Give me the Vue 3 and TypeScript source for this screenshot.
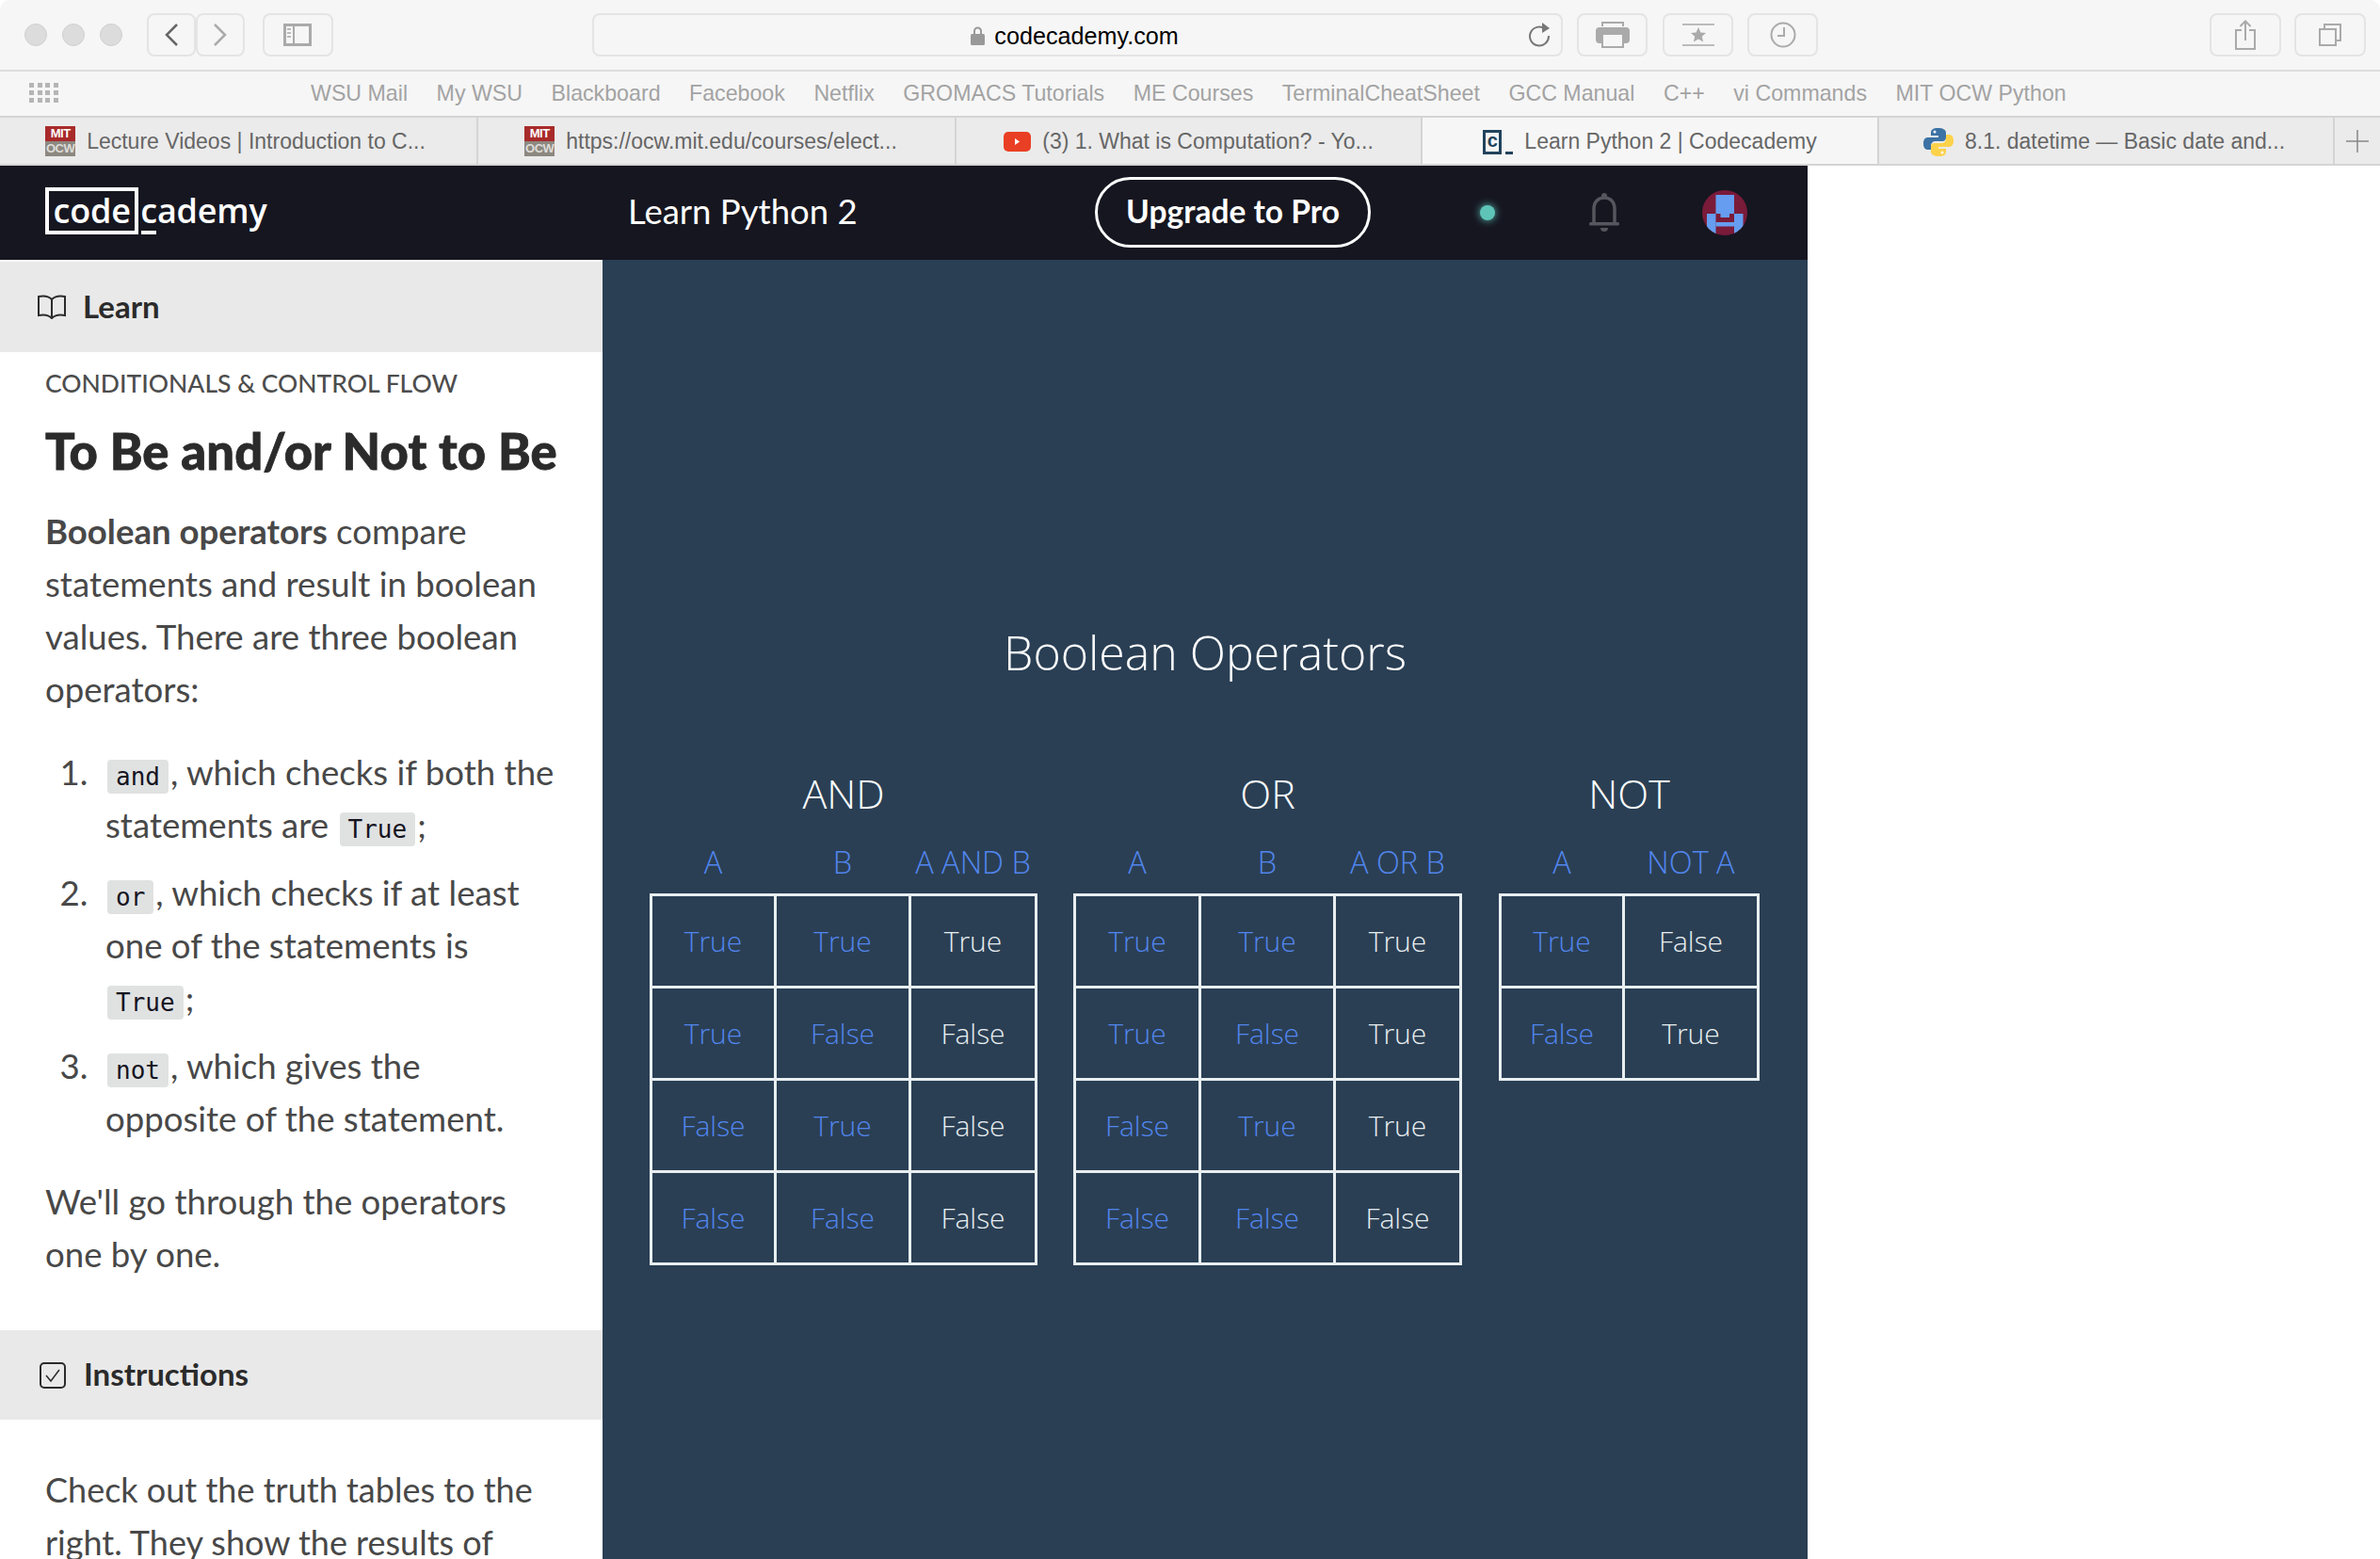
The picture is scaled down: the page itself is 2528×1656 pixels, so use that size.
<script setup lang="ts">
interface TruthTable {
  title: string
  widths: number[]
  head: string[]
  rows: string[][]
}

const bookmarks = [
  'WSU Mail', 'My WSU', 'Blackboard', 'Facebook', 'Netflix', 'GROMACS Tutorials',
  'ME Courses', 'TerminalCheatSheet', 'GCC Manual', 'C++', 'vi Commands', 'MIT OCW Python',
]

const tables: TruthTable[] = [
  {
    title: 'AND',
    widths: [132, 143, 134],
    head: ['A', 'B', 'A AND B'],
    rows: [
      ['True', 'True', 'True'],
      ['True', 'False', 'False'],
      ['False', 'True', 'False'],
      ['False', 'False', 'False'],
    ],
  },
  {
    title: 'OR',
    widths: [133, 143, 134],
    head: ['A', 'B', 'A OR B'],
    rows: [
      ['True', 'True', 'True'],
      ['True', 'False', 'True'],
      ['False', 'True', 'True'],
      ['False', 'False', 'False'],
    ],
  },
  {
    title: 'NOT',
    widths: [131, 143],
    head: ['A', 'NOT A'],
    rows: [
      ['True', 'False'],
      ['False', 'True'],
    ],
  },
]
</script>

<template>
  <div class="page">
    <header class="toolbar">
      <div class="lights"><i></i><i></i><i></i></div>
      <div class="nav-btns">
        <button class="tb-btn back">
          <svg width="16" height="24" viewBox="0 0 16 24"><path d="M14 1 3 12l11 11" fill="none" stroke="#666" stroke-width="2.5" /></svg>
        </button>
        <button class="tb-btn back">
          <svg width="16" height="24" viewBox="0 0 16 24"><path d="M2 1l11 11L2 23" fill="none" stroke="#aaa" stroke-width="2.5" /></svg>
        </button>
      </div>
      <button class="tb-btn sidebar">
        <svg width="30" height="24" viewBox="0 0 30 24">
          <rect x="1.5" y="1.5" width="27" height="21" fill="none" stroke="#aaa" stroke-width="3" />
          <path d="M11 2v20" stroke="#aaa" stroke-width="2" />
          <path d="M4 6h4M4 10h4M4 14h4" stroke="#bbb" stroke-width="2" />
        </svg>
      </button>
      <div class="url">
        <svg class="lock" width="15" height="20" viewBox="0 0 15 20">
          <path d="M4 9V5a3.5 3.5 0 0 1 7 0v4" fill="none" stroke="#999" stroke-width="2" />
          <rect x="0" y="8" width="15" height="12" rx="1.5" fill="#999" />
        </svg>
        <span>codecademy.com</span>
        <svg class="reload" width="24" height="26" viewBox="0 0 24 26">
          <path d="M17 6.5A10 10 0 1 0 21 14" fill="none" stroke="#777" stroke-width="2" />
          <path d="M14 0l8 6-8 5z" fill="#777" />
        </svg>
      </div>
      <button class="tb-btn small print">
        <svg width="36" height="28" viewBox="0 0 36 28">
          <path d="M7 5V1h22v4" fill="none" stroke="#aaa" stroke-width="2" />
          <rect x="0" y="6" width="36" height="17" rx="4" fill="#aaa" />
          <rect x="7" y="13" width="22" height="14" fill="#f6f6f6" stroke="#aaa" stroke-width="2" />
        </svg>
      </button>
      <button class="tb-btn small">
        <svg width="34" height="24" viewBox="0 0 34 24">
          <path d="M0 1h34M0 23h34" stroke="#bbb" stroke-width="2" />
          <path d="M17 4l2.4 5.5 5.6.5-4.2 3.8 1.3 5.7L17 16.5l-5.1 3 1.3-5.7L9 10l5.6-.5z" fill="#aaa" />
        </svg>
      </button>
      <button class="tb-btn small">
        <svg width="28" height="28" viewBox="0 0 28 28">
          <circle cx="14" cy="14" r="12.5" fill="none" stroke="#aaa" stroke-width="2" />
          <path d="M15 6v9H8" fill="none" stroke="#aaa" stroke-width="2" />
        </svg>
      </button>
      <button class="tb-btn wide share">
        <svg width="22" height="32" viewBox="0 0 22 32">
          <path d="M7 11H1v20h20V11h-6" fill="none" stroke="#aaa" stroke-width="2" />
          <path d="M11 22V2M5.5 7 11 1.5 16.5 7" fill="none" stroke="#aaa" stroke-width="2" />
        </svg>
      </button>
      <button class="tb-btn wide">
        <svg width="24" height="24" viewBox="0 0 24 24">
          <rect x="1" y="6" width="17" height="17" fill="none" stroke="#aaa" stroke-width="2" />
          <path d="M6 6V1h17v17h-5" fill="none" stroke="#aaa" stroke-width="2" />
        </svg>
      </button>
    </header>

    <div class="bookmarks">
      <div class="apps"><i v-for="n in 12" :key="n"></i></div>
      <span v-for="b in bookmarks" :key="b">{{ b }}</span>
    </div>

    <div class="tabs">
      <div class="tab t1">
        <span class="fav-mit"><b>MIT</b><b>OCW</b></span>
        <span>Lecture Videos | Introduction to C...</span>
      </div>
      <div class="tab t2">
        <span class="fav-mit"><b>MIT</b><b>OCW</b></span>
        <span>https://ocw.mit.edu/courses/elect...</span>
      </div>
      <div class="tab t3">
        <svg width="29" height="21" viewBox="0 0 29 21">
          <rect width="29" height="21" rx="5" fill="#e93f24" />
          <path d="M12 7l5 3.5-5 3.5z" fill="#fff" />
        </svg>
        <span>(3) 1. What is Computation? - Yo...</span>
      </div>
      <div class="tab t4 active">
        <span class="fav-cc"><em>c</em><u></u></span>
        <span>Learn Python 2 | Codecademy</span>
      </div>
      <div class="tab t5">
        <svg width="32" height="32" viewBox="0 0 32 32">
          <path d="M15.5 1C10 1 8 3 8 6v3h8v2H5c-3 0-5 2-5 6.500S2 24 5 24h3v-4c0-3 2-5 5-5h7c2.500 0 4-1.500 4-4V6c0-3-3-5-8.500-5z" fill="#3c72a4" />
          <path d="M16.5 31c5.500 0 7.500-2 7.500-5v-3h-8v-2h11c3 0 5-2 5-6.500S30 8 27 8h-3v4c0 3-2 5-5 5h-7c-2.500 0-4 1.500-4 4v5c0 3 3 5 8.500 5z" fill="#fcd24a" />
          <circle cx="12" cy="5" r="1.5" fill="#fff" />
          <circle cx="20" cy="27" r="1.5" fill="#fff" />
        </svg>
        <span>8.1. datetime — Basic date and...</span>
      </div>
      <div class="tab-plus">
        <svg width="24" height="24" viewBox="0 0 24 24"><path d="M12 0v24M0 12h24" stroke="#888" stroke-width="1.5" /></svg>
      </div>
    </div>

    <div class="app">
      <nav class="cc-nav">
        <div class="logo"><span class="logo-box">code</span><span class="logo-c">c</span>ademy</div>
        <div class="course">Learn Python 2</div>
        <a class="upgrade"><span>Upgrade to Pro</span></a>
        <span class="status"></span>
        <svg class="bell" width="32" height="42" viewBox="0 0 32 42">
          <circle cx="16" cy="3" r="3" fill="#56565e" />
          <path d="M5 32V17C5 9 10 5 16 5s11 4 11 12v15" fill="none" stroke="#56565e" stroke-width="3.5" />
          <rect x="0" y="31" width="32" height="3.5" rx="1.5" fill="#56565e" />
          <path d="M12 37h8a4 4 0 0 1-8 0z" fill="#56565e" />
        </svg>
        <svg class="avatar" width="48" height="48" viewBox="0 0 48 48">
          <defs><clipPath id="av"><circle cx="24" cy="24" r="24" /></clipPath></defs>
          <g clip-path="url(#av)">
            <rect width="48" height="48" fill="#7a1b3a" />
            <g fill="#669df0">
              <rect x="14.5" y="5" width="19.5" height="20" />
              <rect x="19.5" y="25" width="9.5" height="4" />
              <rect x="5" y="25" width="9.5" height="23" />
              <rect x="34" y="25" width="9.5" height="23" />
              <rect x="14.5" y="34" width="19.5" height="4.5" />
            </g>
          </g>
        </svg>
      </nav>

      <div class="panes">
        <aside class="lesson">
          <div class="bar learn-bar">
            <svg width="30" height="26" viewBox="0 0 30 26">
              <path d="M15 5C12 2 6 1 1 2v20c5-1 11 0 14 3 3-3 9-4 14-3V2c-5-1-11 0-14 3zM15 5v20" fill="none" stroke="#2b2b2b" stroke-width="2" />
            </svg>
            <span>Learn</span>
          </div>
          <div class="body">
            <div class="crumb">CONDITIONALS &amp; CONTROL FLOW</div>
            <h1>To Be and/or Not to Be</h1>
            <p><strong>Boolean operators</strong> compare statements and result in boolean values. There are three boolean operators:</p>
            <ol>
              <li><code>and</code>, which checks if both the statements are <code>True</code>;</li>
              <li><code>or</code>, which checks if at least one of the statements is<br /><code>True</code>;</li>
              <li><code>not</code>, which gives the<br />opposite of the statement.</li>
            </ol>
            <p class="last">We'll go through the operators<br />one by one.</p>
          </div>
          <div class="bar instr-bar">
            <svg width="28" height="28" viewBox="0 0 28 28">
              <rect x="1" y="1" width="26" height="26" rx="4" fill="none" stroke="#2b2b2b" stroke-width="2" />
              <path d="M7 14l5 6 9-12" fill="none" stroke="#2b2b2b" stroke-width="1.5" />
            </svg>
            <span>Instructions</span>
          </div>
          <div class="body instr">
            <p>Check out the truth tables to the right. They show the results of</p>
          </div>
        </aside>

        <main class="stage">
          <h2>Boolean Operators</h2>
          <div class="groups">
            <section v-for="t in tables" :key="t.title" class="group">
              <h3>{{ t.title }}</h3>
              <table>
                <colgroup><col v-for="(w, i) in t.widths" :key="i" :style="{ width: w + 'px' }" /></colgroup>
                <thead>
                  <tr><th v-for="h in t.head" :key="h">{{ h }}</th></tr>
                </thead>
                <tbody>
                  <tr v-for="(row, r) in t.rows" :key="r">
                    <td v-for="(c, i) in row" :key="i" :class="{ input: i < row.length - 1 }">{{ c }}</td>
                  </tr>
                </tbody>
              </table>
            </section>
          </div>
        </main>
      </div>
    </div>
  </div>
</template>

<style>
html, body { margin: 0; background: #fff; }
</style>

<style scoped>
.page { width: 2528px; height: 1656px; overflow: hidden; font-family: "Liberation Sans", sans-serif; }

.toolbar {
  height: 74px; box-sizing: border-box; display: flex; align-items: center; padding: 0 15px 0 26px;
  background: #f6f6f6; border-radius: 10px 10px 0 0; border-bottom: 0;
}
.lights { display: flex; gap: 16px; margin-right: 26px; }
.lights i { width: 24px; height: 24px; border-radius: 50%; background: #dcdcdc; border: 1px solid #d0d0d0; box-sizing: border-box; }
.tb-btn {
  height: 46px; padding: 0; box-sizing: border-box; display: flex; align-items: center; justify-content: center;
  background: #f6f6f6; border: 2px solid #e4e4e4; border-radius: 8px;
}
.nav-btns { display: flex; margin-right: 19px; }
.back { width: 52px; }
.sidebar { width: 75px; margin-right: 275px; }
.url {
  position: relative; width: 1032px; height: 46px; box-sizing: border-box; display: flex; align-items: center; justify-content: center; gap: 10px;
  border: 2px solid #e4e4e4; border-radius: 8px; font-size: 25.2px; color: #000; margin-right: 15px; padding: 2px 6px 0 0;
}
.reload { position: absolute; right: 10px; top: 8px; }
.small { width: 75px; margin-right: 15px; }
.print { margin-right: 16px; }
.wide { width: 76px; }
.share { margin-left: 401px; margin-right: 14px; }

.bookmarks {
  height: 51px; box-sizing: border-box; display: flex; align-items: center; gap: 30.5px; padding-left: 330px; position: relative;
  background: #f6f6f6; border-top: 2px solid #dcdcdc; border-bottom: 2px solid #d4d4d4;
  font-size: 23.2px; color: #a3a3a3;
}
.apps { position: absolute; left: 31px; top: 12px; display: grid; grid-template-columns: repeat(4, 5px); gap: 3px 3.5px; }
.apps i { height: 5px; background: #b5b5b5; }

.tabs { height: 49px; display: flex; font-size: 23px; color: #666; background: #ebebeb; border-bottom: 2px solid #d4d4d4; }
.tab { display: flex; align-items: center; justify-content: center; gap: 12px; box-sizing: border-box; border-right: 2px solid #d4d4d4; white-space: nowrap; padding-top: 2px; }
.t1 { width: 508px; padding-right: 6px; }
.t2 { width: 508px; padding-right: 12px; }
.t3 { width: 495px; }
.t4 { width: 485px; }
.t5 { width: 484px; padding-right: 4px; }
.active { background: #f6f6f6; }
.tab-plus { flex: 1; display: flex; align-items: center; justify-content: center; }
.fav-mit { width: 32px; height: 32px; display: flex; flex-direction: column; overflow: hidden; flex: none; margin-top: -2px; }
.fav-mit b { flex: 1; font-size: 13px; line-height: 16px; letter-spacing: -0.5px; text-align: center; color: #fff; background: #a82a2a; }
.fav-mit b + b { background: #8c8880; color: #dedcd8; }
.fav-cc { display: flex; align-items: flex-end; gap: 4px; height: 26px; margin-right: 0; }
.fav-cc em {
  width: 20px; height: 26px; box-sizing: border-box; border: 3px solid #22435c; font-style: normal; font-weight: 700; font-size: 20px; line-height: 17px;
  text-align: center; color: #22435c;
}
.fav-cc u { display: block; width: 8px; height: 3px; background: #22435c; }

.app { width: 1920px; height: 1480px; margin-top: 0; font-family: Lato, sans-serif; }
.cc-nav { height: 100px; display: flex; align-items: center; background: #161620; color: #fff; padding-left: 48px; position: relative; }
.logo { display: flex; align-items: baseline; font-family: "Open Sans", sans-serif; font-size: 36px; font-weight: 600; letter-spacing: -0.2px; width: 619px; margin-bottom: 5px; flex: none; }
.logo-box { border: 4px solid #fff; padding: 0 4.5px; line-height: 42px; margin-right: 2px; }
.logo-c { position: relative; }
.logo-c::after { content: ""; position: absolute; left: 1px; right: 1px; bottom: -1px; height: 4px; background: #fff; }
.course { font-size: 36.5px; width: 496px; padding-bottom: 5px; flex: none; }
.upgrade {
  width: 293px; height: 75px; box-sizing: border-box; display: flex; align-items: center; justify-content: center;
  border: 3px solid #fff; border-radius: 38px; font-size: 33.5px; font-weight: 700; margin-right: 116px; margin-bottom: 1px; padding-bottom: 3px; flex: none;
}
.status { width: 16px; height: 16px; border-radius: 50%; background: #5fc4b8; box-shadow: 0 0 8px #5fc4b8; margin-right: 100px; }
.bell { margin-right: 88px; }
.avatar { flex: none; }

.panes { display: flex; height: 1380px; }
.lesson { width: 640px; flex: none; overflow: hidden; padding-top: 2px; box-sizing: border-box; background: #fff; }
.bar { display: flex; align-items: center; background: #e9e9e9; font-size: 33px; font-weight: 700; color: #2b2b2b; padding-left: 40px; gap: 18px; }
.bar span { padding-bottom: 3px; }
.learn-bar { height: 96px; }
.instr-bar { height: 95px; padding-left: 42px; gap: 19px; margin-top: 53px; }
.body { padding: 16px 40px 0 48px; font-size: 36.6px; line-height: 56px; color: #484848; }
.crumb { font-size: 26.5px; line-height: 34px; color: #4d4d4d; font-weight: 500; white-space: nowrap; }
h1 { margin: 25px 0 0; font-size: 52.5px; line-height: 60px; font-weight: 900; color: #2b2b2b; white-space: nowrap; letter-spacing: 0.15px; -webkit-text-stroke: 0.8px #2b2b2b; }
p { margin: 27px 0 0; }
ol { margin: 32px 0 0; padding: 0 0 0 64px; }
li { margin-bottom: 16px; }
li:last-child { margin-bottom: 0; }
li::marker { content: counter(list-item) ".  "; }
.last { margin-top: 32px; }
code {
  font-family: "DejaVu Sans Mono", monospace; font-size: 26px; line-height: 1; color: #15141f; background: #e0e2e2; border-radius: 4px; padding: 3px 9px; margin: 0 2px;
}
.instr { padding-top: 19px; }
.instr p { font-size: 36px; }

.stage { flex: 1; background: #2a3f54; color: #fff; padding: 382px 0 0 50px; font-family: "Open Sans", sans-serif; font-weight: 300; box-sizing: border-box; }
h2 { margin: 0 0 0 -50px; text-align: center; font-weight: 300; font-size: 50px; line-height: 70px; }
.groups { display: flex; gap: 38px; margin-top: 85px; }
.group { display: flex; flex-direction: column; align-items: center; }
.group:last-child { margin-left: 1px; }
h3 { margin: 0; font-weight: 300; font-size: 43px; line-height: 60px; }
table { border-collapse: collapse; table-layout: fixed; margin-top: 16px; }
th { font-weight: 300; font-size: 32.5px; color: #5286ee; height: 61px; padding: 0 0 6px; box-sizing: border-box; white-space: nowrap; }
td { border: 3px solid #e8eef0; height: 95px; padding: 0; text-align: center; font-size: 30px; color: #e8eef0; }
td.input { color: #5286ee; }
</style>
